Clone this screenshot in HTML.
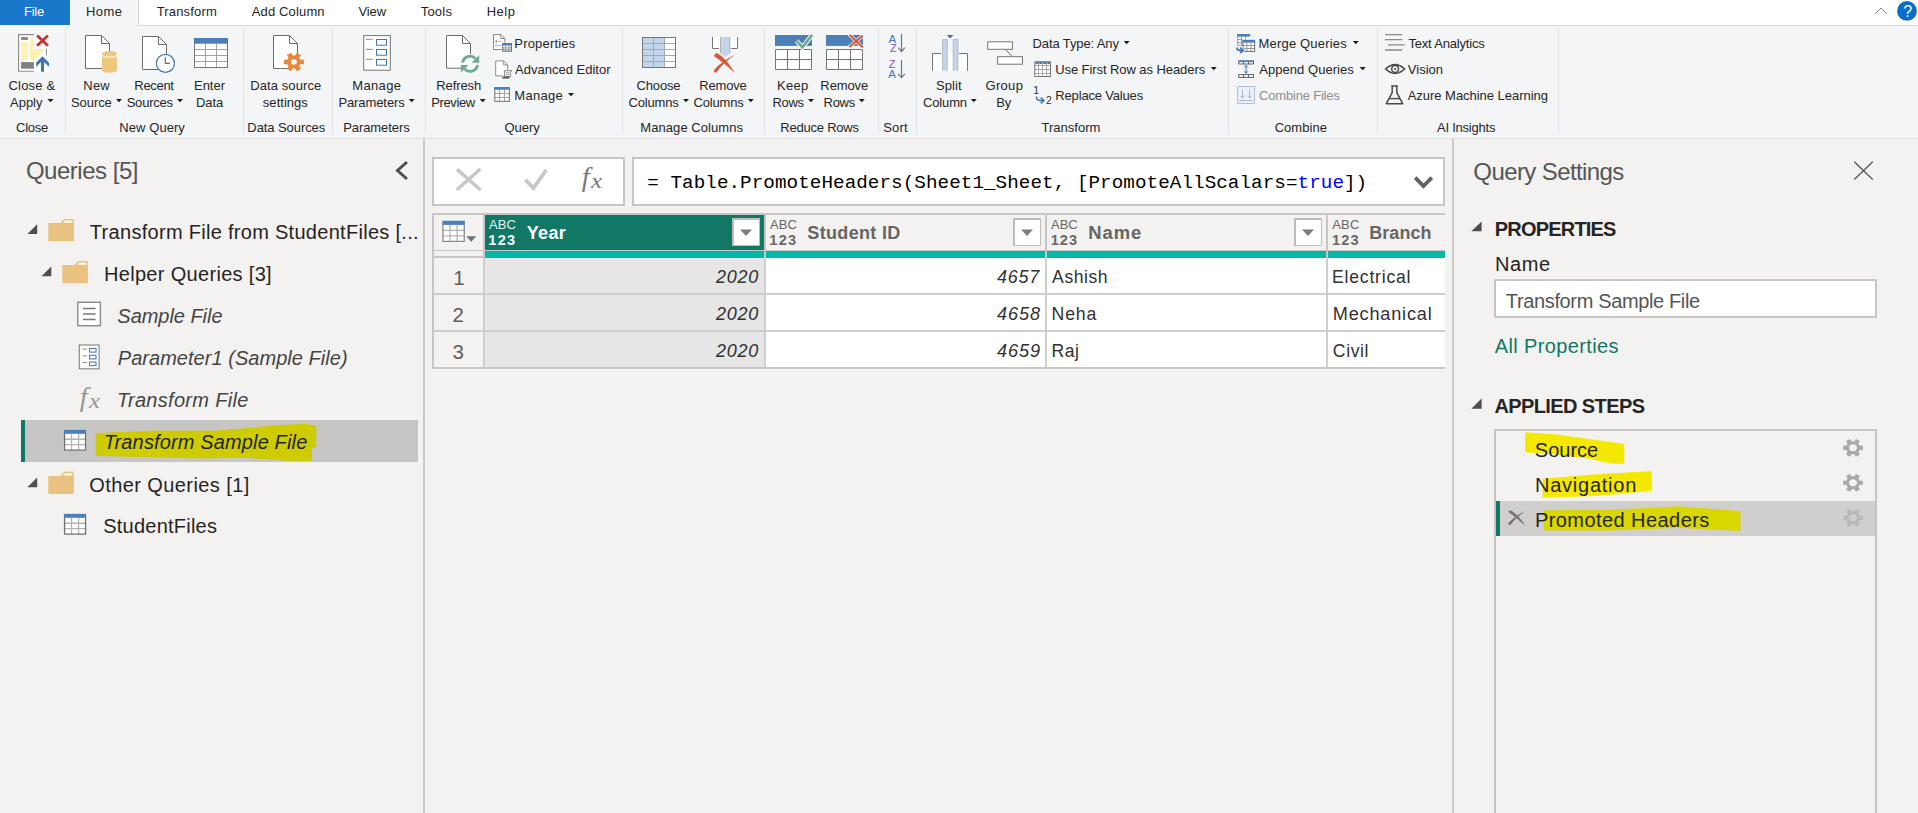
<!DOCTYPE html>
<html lang="en">
<head>
<meta charset="utf-8">
<title>Power Query Editor</title>
<style>
html,body{margin:0;padding:0;}
body{width:1918px;height:813px;overflow:hidden;background:#f3f2f1;position:relative;font-family:"Liberation Sans", sans-serif;color:#252423;}
#bg{position:absolute;left:0;top:0;width:1918px;height:813px;display:block;}
.t{position:absolute;white-space:pre;line-height:normal;}
</style>
</head>
<body>
<svg id="bg" width="1918" height="813" viewBox="0 0 1918 813">
<g shape-rendering="crispEdges">
<rect x="0" y="0" width="1918" height="25" fill="#ffffff" />
<rect x="0" y="25" width="1918" height="1" fill="#d6d8db" />
<rect x="0" y="26" width="1918" height="112" fill="#f4f5f7" />
<rect x="0" y="138" width="1918" height="1" fill="#dcdde0" />
<rect x="0" y="0" width="70" height="25" fill="#1978c9" />
<rect x="0" y="25" width="70" height="1" fill="#f8f9fa" />
<rect x="70" y="0" width="68" height="26" fill="#f4f5f7" />
<rect x="138" y="0" width="1" height="25" fill="#d6d8db" />
<rect x="65" y="28" width="1" height="106.5" fill="#e1e2e5" />
<rect x="243" y="28" width="1" height="106.5" fill="#e1e2e5" />
<rect x="332" y="28" width="1" height="106.5" fill="#e1e2e5" />
<rect x="425" y="28" width="1" height="106.5" fill="#e1e2e5" />
<rect x="622" y="28" width="1" height="106.5" fill="#e1e2e5" />
<rect x="764" y="28" width="1" height="106.5" fill="#e1e2e5" />
<rect x="878" y="28" width="1" height="106.5" fill="#e1e2e5" />
<rect x="916" y="28" width="1" height="106.5" fill="#e1e2e5" />
<rect x="1228" y="28" width="1" height="106.5" fill="#e1e2e5" />
<rect x="1377" y="28" width="1" height="106.5" fill="#e1e2e5" />
<rect x="1558" y="28" width="1" height="106.5" fill="#e1e2e5" />
<rect x="423" y="139" width="2" height="674" fill="#cbc9c7" />
<rect x="1452" y="139" width="2" height="674" fill="#cbc9c7" />
<rect x="21" y="420" width="397" height="42" fill="#c8c6c4" />
<rect x="21" y="420" width="4" height="42" fill="#117865" />
<rect x="433.0" y="158.0" width="191" height="47" fill="#ffffff" stroke="#c8c6c4" stroke-width="2" />
<rect x="633.0" y="158.0" width="811" height="47" fill="#ffffff" stroke="#c8c6c4" stroke-width="2" />
<rect x="432" y="213" width="1013" height="156" fill="#c8c6c4" />
<rect x="434" y="258" width="1011" height="109" fill="#d0cecc" />
<rect x="434" y="215" width="49" height="35" fill="#f3f2f1" />
<rect x="485" y="215" width="279" height="35" fill="#117865" />
<rect x="766" y="215" width="279" height="35" fill="#f3f2f1" />
<rect x="1047" y="215" width="279" height="35" fill="#f3f2f1" />
<rect x="1328" y="215" width="117" height="35" fill="#f3f2f1" />
<rect x="434" y="251" width="49" height="5" fill="#f3f2f1" />
<rect x="485" y="251" width="279" height="7" fill="#01b8aa" />
<rect x="766" y="251" width="279" height="7" fill="#01b8aa" />
<rect x="1047" y="251" width="279" height="7" fill="#01b8aa" />
<rect x="1328" y="251" width="117" height="7" fill="#01b8aa" />
<rect x="434" y="258" width="49" height="35" fill="#f3f2f1" />
<rect x="485" y="258" width="279" height="35" fill="#e6e6e6" />
<rect x="766" y="258" width="279" height="35" fill="#ffffff" />
<rect x="1047" y="258" width="279" height="35" fill="#ffffff" />
<rect x="1328" y="258" width="117" height="35" fill="#ffffff" />
<rect x="434" y="295" width="49" height="35" fill="#f3f2f1" />
<rect x="485" y="295" width="279" height="35" fill="#e6e6e6" />
<rect x="766" y="295" width="279" height="35" fill="#ffffff" />
<rect x="1047" y="295" width="279" height="35" fill="#ffffff" />
<rect x="1328" y="295" width="117" height="35" fill="#ffffff" />
<rect x="434" y="332" width="49" height="35" fill="#f3f2f1" />
<rect x="485" y="332" width="279" height="35" fill="#e6e6e6" />
<rect x="766" y="332" width="279" height="35" fill="#ffffff" />
<rect x="1047" y="332" width="279" height="35" fill="#ffffff" />
<rect x="1328" y="332" width="117" height="35" fill="#ffffff" />
<rect x="732.9000000000001" y="219.0" width="26.399999999999956" height="26.29999999999999" fill="#ffffff" stroke="#bfbdbb" stroke-width="1.4" />
<rect x="1013.9000000000001" y="219.0" width="26.399999999999956" height="26.29999999999999" fill="#ffffff" stroke="#bfbdbb" stroke-width="1.4" />
<rect x="1294.9" y="219.0" width="26.399999999999956" height="26.29999999999999" fill="#ffffff" stroke="#bfbdbb" stroke-width="1.4" />
<rect x="1495.0" y="280.0" width="381" height="37" fill="#ffffff" stroke="#c8c6c4" stroke-width="2" />
<rect x="1495.0" y="430.0" width="381" height="399" fill="none" stroke="#c8c6c4" stroke-width="2" />
<rect x="1496" y="501" width="379" height="35" fill="#d0cfce" />
<rect x="1496" y="501" width="4" height="35" fill="#117865" />
</g>
<path d="M740 229.5H752L746 236Z" fill="#7d7d7d"/>
<path d="M1021 229.5H1033L1027 236Z" fill="#7d7d7d"/>
<path d="M1302 229.5H1314L1308 236Z" fill="#7d7d7d"/>
<path d="M96.3 433.6L152.6 431.1L215.2 431.1L246.4 428.6L277.7 425.5L305.3 424.3L315.9 426.1L315.9 446.8L311.3 448L311.3 460.6L290.3 460.6L246.4 457.4L196.4 458.1L152.6 456.8L96.3 455.5Z" fill="#cecb00" stroke="#cecb00" stroke-width="0.8" stroke-linejoin="round"/>
<path d="M1525.6 432.7L1555.6 434.8L1589.4 439.5L1623.9 444.2L1623.9 463.4L1609.7 462.9L1589.4 458.4L1555.6 453.7L1525.6 452.1Z" fill="#f5e800" stroke="#f5e800" stroke-width="0.8" stroke-linejoin="round"/>
<path d="M1543 479.1L1596.2 474.7L1651.4 471.6L1651.4 490.5L1596.2 495.6L1543 497.3Z" fill="#f5e800" stroke="#f5e800" stroke-width="0.8" stroke-linejoin="round"/>
<path d="M1544.1 510.8L1609.7 510.3L1677.3 506.7L1711.2 509.2L1740 511.6L1740 530.5L1677.3 527.4L1609.7 530.1L1544.1 530.1Z" fill="#d9d600" stroke="#d9d600" stroke-width="0.8" stroke-linejoin="round"/>
<path d="M1875 14L1881 8L1887 14" fill="none" stroke="#858585" stroke-width="1"/>
<circle cx="1907" cy="10.9" r="9.9" fill="#0b6cc9"/>
<path d="M47.5 99H53.5L50.5 102.3Z" fill="#1a1a1a"/>
<path d="M116 99H122L119.0 102.3Z" fill="#1a1a1a"/>
<path d="M177 99H183L180.0 102.3Z" fill="#1a1a1a"/>
<path d="M408.7 99H414.7L411.7 102.3Z" fill="#1a1a1a"/>
<path d="M479.7 99H485.7L482.7 102.3Z" fill="#1a1a1a"/>
<path d="M683 99H689L686.0 102.3Z" fill="#1a1a1a"/>
<path d="M747.8 99H753.8L750.8 102.3Z" fill="#1a1a1a"/>
<path d="M808 99H814L811.0 102.3Z" fill="#1a1a1a"/>
<path d="M858.8 99H864.8L861.8 102.3Z" fill="#1a1a1a"/>
<path d="M970.8 99H976.8L973.8 102.3Z" fill="#1a1a1a"/>
<path d="M568 93H574L571.0 96.3Z" fill="#1a1a1a"/>
<path d="M1123.7 41H1129.7L1126.7 44.3Z" fill="#1a1a1a"/>
<path d="M1210.8 67H1216.8L1213.8 70.3Z" fill="#1a1a1a"/>
<path d="M1352.8 41H1358.8L1355.8 44.3Z" fill="#1a1a1a"/>
<path d="M1359.7 67H1365.7L1362.7 70.3Z" fill="#1a1a1a"/>
<rect x="18" y="34" width="31.4" height="38" fill="#ffffff"/>
<path d="M34 34.6H18.6V71.3H34" fill="none" stroke="#8a8a8a" stroke-width="1.1"/>
<rect x="21.1" y="37.1" width="6.8" height="2.8" fill="#808080"/>
<rect x="20.9" y="42" width="7.1" height="18" fill="#fff0b3"/>
<path d="M30 37.1H34V48.9H44.1V50.6L34.3 60H30Z" fill="#fff0b3"/>
<rect x="21.1" y="62.1" width="12.8" height="6.6" fill="#808080"/>
<path d="M37.1 35.5L47.9 45.8M47.9 35.5L37.1 45.8" stroke="#cc2f2b" stroke-width="2.8" fill="none"/>
<path d="M42.5 56.3L49 62.8V66.7L44 61.9V71.8H41V61.9L36.1 66.7V62.8Z" fill="#3d76b3"/>
<path d="M46.4 48.9V55.7" stroke="#8a8a8a" stroke-width="1" fill="none"/>
<path d="M85.5 35.5H101.5L109.5 43.5V68.5H85.5Z" fill="#ffffff" stroke="#6e6e6e" stroke-width="1"/>
<path d="M101.5 35.5V43.5H109.5" fill="none" stroke="#6e6e6e" stroke-width="1"/>
<path d="M102 53.5V70.2a7.5 2.6 0 0 0 15 0V53.5a7.5 2.6 0 0 0 -15 0Z" fill="#edc87e"/>
<path d="M102 54.6a7.5 2.6 0 0 0 15 0" fill="none" stroke="#fdf8ec" stroke-width="1.2"/>
<path d="M142.5 36.5H158.5L166.5 44.5V69.5H142.5Z" fill="#ffffff" stroke="#6e6e6e" stroke-width="1"/>
<path d="M158.5 36.5V44.5H166.5" fill="none" stroke="#6e6e6e" stroke-width="1"/>
<circle cx="165.4" cy="63.4" r="9" fill="#ffffff" stroke="#3d76b3" stroke-width="1.2"/>
<path d="M165.4 57.2V63.4H169.8" fill="none" stroke="#6e6e6e" stroke-width="1.2"/>
<rect x="194" y="38" width="34" height="30" fill="#ffffff"/>
<path d="M194 49.5H228M194 55.5H228M194 61.5H228M205.5 43.5V68M216.5 43.5V68" stroke="#a3a3a3" stroke-width="1" fill="none"/>
<rect x="194.5" y="38.5" width="33" height="29" fill="none" stroke="#757575"/>
<rect x="194" y="38" width="34" height="5.7" fill="#4a7fb8"/>
<path d="M273.5 35.5H289.5L297.5 43.5V68.5H273.5Z" fill="#ffffff" stroke="#6e6e6e" stroke-width="1"/>
<path d="M289.5 35.5V43.5H297.5" fill="none" stroke="#6e6e6e" stroke-width="1"/>
<circle cx="293.9" cy="62" r="8" fill="#f9f9fa"/>
<g transform="translate(293.9 62) scale(1 0.93) translate(-293.9 -62)"><rect x="291.50" y="52.00" width="4.80" height="6.70" fill="#e8883c" transform="rotate(30.0 293.9 62)"/><rect x="291.50" y="52.00" width="4.80" height="6.70" fill="#e8883c" transform="rotate(90.0 293.9 62)"/><rect x="291.50" y="52.00" width="4.80" height="6.70" fill="#e8883c" transform="rotate(150.0 293.9 62)"/><rect x="291.50" y="52.00" width="4.80" height="6.70" fill="#e8883c" transform="rotate(210.0 293.9 62)"/><rect x="291.50" y="52.00" width="4.80" height="6.70" fill="#e8883c" transform="rotate(270.0 293.9 62)"/><rect x="291.50" y="52.00" width="4.80" height="6.70" fill="#e8883c" transform="rotate(330.0 293.9 62)"/><circle cx="293.9" cy="62" r="5.00" fill="none" stroke="#e8883c" stroke-width="4.00"/></g>
<rect x="363.7" y="35.6" width="26.6" height="34.6" fill="#ffffff" stroke="#757575"/>
<rect x="376.5" y="39.5" width="10" height="5.7" fill="#ffffff" stroke="#3d76b3" stroke-width="1"/>
<path d="M366 39.3H372.8" stroke="#8a8a8a" stroke-width="1"/>
<rect x="376.5" y="49.5" width="10" height="5.7" fill="#ffffff" stroke="#3d76b3" stroke-width="1"/>
<path d="M366 49.3H372.8" stroke="#8a8a8a" stroke-width="1"/>
<rect x="376.5" y="59.5" width="10" height="5.7" fill="#ffffff" stroke="#3d76b3" stroke-width="1"/>
<path d="M366 59.3H372.8" stroke="#8a8a8a" stroke-width="1"/>
<path d="M446.5 35.5H462.5L470.5 43.5V68.2H446.5Z" fill="#ffffff" stroke="#6e6e6e" stroke-width="1"/>
<path d="M462.5 35.5V43.5H470.5" fill="none" stroke="#6e6e6e" stroke-width="1"/>
<circle cx="470.1" cy="63.8" r="9.8" fill="#f7f8f9"/>
<path d="M462.7 62.6A7.5 7.5 0 0 1 475.6 58.6" fill="none" stroke="#6fa992" stroke-width="2.8"/>
<path d="M479.2 55.2V62.8H471.6Z" fill="#6fa992"/>
<path d="M477.5 65A7.5 7.5 0 0 1 464.6 69" fill="none" stroke="#6fa992" stroke-width="2.8"/>
<path d="M460.9 72.5V64.9H468.5Z" fill="#6fa992"/>
<path d="M493.5 34.5H500.8L504.8 38.5V49.5H493.5Z" fill="#ffffff" stroke="#8a8a8a" stroke-width="1"/>
<path d="M500.8 34.5V38.5H504.8" fill="none" stroke="#8a8a8a" stroke-width="1"/>
<circle cx="496.4" cy="41.4" r="1.1" fill="#8a8a8a"/><circle cx="496.4" cy="45.4" r="0.9" fill="none" stroke="#8a8a8a" stroke-width="0.7"/>
<path d="M498.7 41.4h2.6M498.7 45.4h2.6" stroke="#9a9a9a" stroke-width="0.9"/>
<rect x="501.7" y="42.6" width="10.8" height="9.6" fill="#f4f5f7"/>
<rect x="502.2" y="43.1" width="9.8" height="8.6" fill="#ffffff"/>
<path d="M502.2 47.9H512M502.2 49.8H512M505.5 45.4V51.7M508.8 45.4V51.7" stroke="#8f8f8f" stroke-width="0.9" fill="none"/>
<rect x="502.7" y="43.6" width="8.8" height="7.6" fill="none" stroke="#6e6e6e"/>
<rect x="502.2" y="43.1" width="9.8" height="2.4" fill="#4a7fb8"/>
<path d="M495.7 60.9H503.7L507.7 64.9V75.9H495.7Z" fill="#ffffff" stroke="#8a8a8a" stroke-width="1"/>
<path d="M503.7 60.9V64.9H507.7" fill="none" stroke="#8a8a8a" stroke-width="1"/>
<rect x="503" y="69.6" width="9.5" height="9.5" fill="#f4f5f7"/>
<path d="M504.7 70.7H511.8L510.3 72.3V76.5H504.7Z" fill="#ffffff" stroke="#6e6e6e" stroke-width="0.9"/>
<path d="M506 72.7h3M506 74.5h3" stroke="#8a8a8a" stroke-width="0.8"/>
<rect x="502.4" y="76.6" width="7" height="2" fill="#5e5e5e"/>
<rect x="494.3" y="87.2" width="15.6" height="14.6" fill="#ffffff"/>
<path d="M494.3 93.5H509.9M494.3 97.5H509.9M499.5 89.6V101.8M504.5 89.6V101.8" stroke="#a3a3a3" stroke-width="1" fill="none"/>
<rect x="494.8" y="87.7" width="14.6" height="13.6" fill="none" stroke="#6e6e6e"/>
<rect x="494.3" y="87.2" width="15.6" height="2.5" fill="#4a7fb8"/>
<rect x="642" y="37" width="34" height="31" fill="#ffffff"/>
<rect x="642" y="37" width="22.5" height="31" fill="#c2d5eb"/>
<path d="M642 43.5H676M642 49.5H676M642 55.5H676M642 61.5H676M653.5 37V68M664.5 37V68" stroke="#a8a8a8" stroke-width="1" fill="none"/>
<rect x="642.5" y="37.5" width="33" height="30" fill="none" stroke="#757575"/>
<rect x="712" y="37" width="26" height="12" fill="#ffffff"/>
<path d="M712.5 37V48.5H719M737.5 37V48.5H731.2" fill="none" stroke="#757575" stroke-width="1"/>
<path d="M720.3 37H730V53.2L725.2 57L720.3 53.2Z" fill="#c2d5eb"/>
<path d="M720.5 37V53M729.8 37V53" fill="none" stroke="#a8a8a8" stroke-width="0.9"/>
<path d="M714.2 56.2C714.2 53.6 716.3 52.6 718.6 54C724.5 57.8 730.5 65.5 734.9 73C729 67.3 721 60.8 714.2 56.2Z" fill="#d9583a"/>
<path d="M735 54.8C728.3 57.6 719.5 63.8 714.3 69.9C713.3 71.6 714.4 73.2 716.4 72.4C721 66 727.5 59.8 735 54.8Z" fill="#d9583a"/>
<rect x="775" y="35" width="37" height="10.9" fill="#4a7fb8"/>
<rect x="775" y="49" width="37" height="21" fill="#ffffff"/>
<path d="M775.5 49.5H811.5V69.5H775.5ZM775 59.5H812M787.5 49.5V69.5M799.5 49.5V69.5" fill="none" stroke="#757575" stroke-width="1"/>
<path d="M796.5 40.9L802.4 47.2L812.2 34.9" fill="none" stroke="#fafbfc" stroke-width="4.6"/>
<path d="M796.5 40.9L802.4 47.2L812.2 34.9" fill="none" stroke="#6fa992" stroke-width="2.7"/>
<rect x="826" y="35" width="37" height="10.9" fill="#4a7fb8"/>
<rect x="826" y="49" width="37" height="21" fill="#ffffff"/>
<path d="M826.5 49.5H862.5V69.5H826.5ZM826 59.5H863M838.5 49.5V69.5M850.5 49.5V69.5" fill="none" stroke="#757575" stroke-width="1"/>
<path d="M849.9 35.2L862.6 47.2M862.5 35.8L849.3 46.9" fill="none" stroke="#fafbfc" stroke-width="3.6" stroke-linecap="round"/>
<path d="M850.3 35.6L862.2 46.8M862.1 36.1L849.9 46.4" fill="none" stroke="#d9583a" stroke-width="2.2" stroke-linecap="round"/>
<path d="M901.5 34V51.4M898.1 47.7L901.5 51.5L904.9 47.7" fill="none" stroke="#757575" stroke-width="1.2"/>
<path d="M901.5 60V77.5M898.1 73.8L901.5 77.6L904.9 73.8" fill="none" stroke="#757575" stroke-width="1.2"/>
<rect x="932" y="53" width="36" height="17.8" fill="#ffffff"/>
<path d="M932.5 70.8V53.5H941M959 53.5H967.5V70.8" fill="none" stroke="#757575"/>
<rect x="942.2" y="39.2" width="5.2" height="31.6" fill="#c2d5eb"/><rect x="953" y="39.2" width="5.2" height="31.6" fill="#c2d5eb"/>
<path d="M942.5 70.8V39.5H947.2V70.8M953.2 70.8V39.5H957.9V70.8" fill="none" stroke="#b4b4b4" stroke-width="0.8"/>
<path d="M946.7 35H953.5L950.1 38.5Z" fill="#3d76b3"/>
<rect x="987.7" y="41.8" width="24.7" height="7.5" fill="#ffffff" stroke="#757575"/>
<rect x="997.6" y="56.7" width="24.9" height="7.5" fill="#ffffff" stroke="#757575"/>
<path d="M1005.7 49.7L1012 56.3" stroke="#757575" fill="none"/>
<rect x="1034.3" y="61.2" width="16.7" height="15.8" fill="#ffffff"/>
<path d="M1034.3 65.5H1051M1034.3 69.5H1051M1034.3 73.5H1051M1038.5 61.2V77M1042.5 61.2V77M1046.5 61.2V77" stroke="#a8a8a8" stroke-width="1" fill="none"/>
<rect x="1034.8" y="61.7" width="15.7" height="14.8" fill="none" stroke="#757575"/>
<path d="M1035.6 63H1037.9M1039.2 63H1041.9M1043.2 63H1045.9M1047.2 63H1049.8" stroke="#3d76b3" stroke-width="1.8" fill="none"/>
<path d="M1036.4 96.6C1036.4 99.5 1037.5 100.5 1040 100.5H1043.4M1040.8 97.6L1043.9 100.5L1040.8 103.4" fill="none" stroke="#3d76b3" stroke-width="1.5"/>
<rect x="1237.2" y="34" width="13" height="11.8" fill="#ffffff"/>
<path d="M1237.7 34V45.3H1243M1237.2 39.5H1243M1237.2 42.5H1243M1241.5 36.5V45.8M1245.5 36.5V40" stroke="#9a9a9a" stroke-width="1" fill="none"/>
<rect x="1237.2" y="34" width="13" height="2.6" fill="#4a7fb8"/>
<rect x="1242" y="39.4" width="13.6" height="13" fill="#f4f5f7"/>
<rect x="1242.5" y="39.9" width="12.6" height="12" fill="#ffffff"/>
<path d="M1242.5 45.5H1255.1M1242.5 48.5H1255.1M1246.8 42.5V51.9M1250.9 42.5V51.9" stroke="#8f8f8f" stroke-width="0.9" fill="none"/>
<rect x="1243" y="40.4" width="11.6" height="11" fill="none" stroke="#6e6e6e"/>
<rect x="1242.5" y="39.9" width="12.6" height="2.7" fill="#4a7fb8"/>
<path d="M1236.9 47.4C1236.9 49.6 1237.9 50.3 1240 50.3H1243M1240.1 47.6L1243.4 50.3L1240.1 53" fill="none" stroke="#f4f5f7" stroke-width="3.2"/>
<path d="M1236.9 47.4C1236.9 49.6 1237.9 50.3 1240 50.3H1243M1240.1 47.6L1243.4 50.3L1240.1 53" fill="none" stroke="#3d76b3" stroke-width="1.7"/>
<rect x="1238.2" y="60.2" width="15.8" height="4.2" fill="#ffffff"/>
<rect x="1238.2" y="60.2" width="15.8" height="1.9" fill="#4a7fb8"/>
<path d="M1238.7 62V64H1253.5V62M1243.5 62V64M1248.7 62V64" stroke="#5e5e5e" fill="none"/>
<rect x="1238.7" y="74.6" width="14.8" height="2.8" fill="#ffffff" stroke="#5e5e5e"/>
<path d="M1243.5 74.4V77.6M1248.7 74.4V77.6" stroke="#5e5e5e" fill="none"/>
<path d="M1246.1 65.5V73.2M1244.3 67.4L1246.1 65.4L1247.9 67.4M1244.3 71.3L1246.1 73.3L1247.9 71.3" stroke="#3d76b3" fill="none" stroke-width="1"/>
<rect x="1237.7" y="86.6" width="16.8" height="16.8" fill="#eef3fb" stroke="#a9bcd6"/>
<path d="M1242.5 89.5V98M1240.5 95.8L1242.5 98.1L1244.5 95.8M1249.7 89.5V98M1247.7 95.8L1249.7 98.1L1251.7 95.8M1239.2 100.5H1253" stroke="#a3b8d4" fill="none"/>
<path d="M1385 34.6H1402.3M1385 39.6H1402.3M1387.9 44.9H1404.7M1385 50H1402.3" stroke="#8a8a8a" stroke-width="1.3" fill="none"/>
<path d="M1385.6 69Q1395.1 60.2 1404.6 69Q1395.1 77.8 1385.6 69Z" fill="none" stroke="#4a4a4a" stroke-width="1.6"/>
<circle cx="1395.1" cy="69" r="3.4" fill="none" stroke="#4a4a4a" stroke-width="1.5"/><circle cx="1395.1" cy="69" r="1.1" fill="#4a4a4a"/>
<path d="M1391.2 85.9H1397.8M1392.2 86V92.6L1386.3 103.7H1402.7L1396.8 92.6V86" fill="none" stroke="#4a4a4a" stroke-width="1.5" stroke-linejoin="round"/>
<path d="M1389 98.6H1400" stroke="#4a4a4a" stroke-width="1.4"/>
<path d="M407 162L397.5 170.5L407 179" fill="none" stroke="#505050" stroke-width="3"/>
<path d="M37.2 224.3V234.1H27.4Z" fill="#4f4f4f"/>
<path d="M48.3 223.1H60.599999999999994L64.1 218.9H73.9V241.20000000000002H48.3Z" fill="#e9c281"/>
<path d="M65.3 220.4H72.3V222.8H63.3Z" fill="#fefaf0"/>
<path d="M51.3 266.4V276.2H41.5Z" fill="#4f4f4f"/>
<path d="M62.3 265.09999999999997H74.6L78.1 260.9H87.9V283.2H62.3Z" fill="#e9c281"/>
<path d="M79.3 262.4H86.3V264.79999999999995H77.3Z" fill="#fefaf0"/>
<path d="M37.2 477.4V487.2H27.4Z" fill="#4f4f4f"/>
<path d="M48.3 475.9H60.599999999999994L64.1 471.7H73.9V494.0H48.3Z" fill="#e9c281"/>
<path d="M65.3 473.2H72.3V475.59999999999997H63.3Z" fill="#fefaf0"/>
<rect x="77.8" y="302.3" width="22.6" height="23.4" fill="#ffffff" stroke="#8a8a8a" stroke-width="1.4"/>
<path d="M83 308.5H95.5M83 314H95.5M83 319.5H95.5" stroke="#7a7a7a" stroke-width="1.3"/>
<rect x="79.3" y="345" width="19.8" height="23.8" fill="#ffffff" stroke="#8a8a8a" stroke-width="1.2"/>
<rect x="89.5" y="348.5" width="6.5" height="3.6" fill="#ffffff" stroke="#4a7ebb" stroke-width="1.1"/>
<path d="M82.5 349.1H87" stroke="#8a8a8a" stroke-width="1"/>
<rect x="89.5" y="355.3" width="6.5" height="3.6" fill="#ffffff" stroke="#4a7ebb" stroke-width="1.1"/>
<path d="M82.5 355.90000000000003H87" stroke="#8a8a8a" stroke-width="1"/>
<rect x="89.5" y="362" width="6.5" height="3.6" fill="#ffffff" stroke="#4a7ebb" stroke-width="1.1"/>
<path d="M82.5 362.6H87" stroke="#8a8a8a" stroke-width="1"/>
<rect x="63.9" y="429.8" width="22.3" height="21" fill="#ffffff"/>
<path d="M71.55 433.8V450.8M63.9 439.25H86.2M78.55 433.8V450.8M63.9 444.70H86.2" stroke="#b4b4b4" stroke-width="1.3" fill="none"/>
<path d="M64.55 433.3V450.15000000000003H85.55V433.3" stroke="#6e6e6e" stroke-width="1.3" fill="none"/>
<rect x="63.9" y="429.8" width="22.3" height="4" fill="#4a7fb8"/>
<rect x="63.9" y="513.8" width="22.3" height="21" fill="#ffffff"/>
<path d="M71.55 517.8V534.8M63.9 523.25H86.2M78.55 517.8V534.8M63.9 528.70H86.2" stroke="#b4b4b4" stroke-width="1.3" fill="none"/>
<path d="M64.55 517.3V534.15H85.55V517.3" stroke="#6e6e6e" stroke-width="1.3" fill="none"/>
<rect x="63.9" y="513.8" width="22.3" height="4" fill="#4a7fb8"/>
<path d="M457 169.3L480.7 190M480.3 169L456.7 190" fill="none" stroke="#c8c8c8" stroke-width="3.6"/>
<path d="M525.3 179.8L533.5 188L546.2 170" fill="none" stroke="#c8c8c8" stroke-width="3.8"/>
<path d="M1415.2 177.6L1423.5 186L1431.8 177.6" fill="none" stroke="#626262" stroke-width="3.7"/>
<rect x="442.3" y="220.7" width="22.6" height="21.3" fill="#ffffff"/>
<path d="M450.05 224.89999999999998V242.0M442.3 230.38H464.90000000000003M457.15 224.89999999999998V242.0M442.3 235.87H464.90000000000003" stroke="#b4b4b4" stroke-width="1.3" fill="none"/>
<path d="M442.95 224.39999999999998V241.35H464.25000000000006V224.39999999999998" stroke="#8a8a8a" stroke-width="1.3" fill="none"/>
<rect x="442.3" y="220.7" width="22.6" height="4.2" fill="#4a7fb8"/>
<path d="M466.2 236.2H476.2L471.2 241.8Z" fill="#707070"/>
<path d="M1854.3 161.7L1872.7 179.5M1872.7 161.7L1854.3 179.5" fill="none" stroke="#555555" stroke-width="1.3"/>
<path d="M1481.6 221.4V231.3H1471.3Z" fill="#4f4f4f"/>
<path d="M1481.6 398.4V408.7H1471.3Z" fill="#4f4f4f"/>
<path d="M1508.5 512C1508.6 510.3 1510.4 510 1512 511C1516.8 514 1521.6 519.5 1525.4 525.8C1520.5 521.4 1514 516.2 1508.5 512Z" fill="#777777"/>
<path d="M1525.4 511.1C1519.5 513.6 1513 518.3 1508.6 522.5C1507.7 523.9 1508.8 525.5 1510.6 524.8C1514.6 519.8 1519.6 515.2 1525.4 511.1Z" fill="#777777"/>
<g transform="translate(1853 447.8) scale(1 0.91) translate(-1853 -447.8)"><rect x="1850.70" y="437.90" width="4.60" height="5.70" fill="#a9a9a9" transform="rotate(30.0 1853 447.8)"/><rect x="1850.70" y="437.90" width="4.60" height="5.70" fill="#a9a9a9" transform="rotate(90.0 1853 447.8)"/><rect x="1850.70" y="437.90" width="4.60" height="5.70" fill="#a9a9a9" transform="rotate(150.0 1853 447.8)"/><rect x="1850.70" y="437.90" width="4.60" height="5.70" fill="#a9a9a9" transform="rotate(210.0 1853 447.8)"/><rect x="1850.70" y="437.90" width="4.60" height="5.70" fill="#a9a9a9" transform="rotate(270.0 1853 447.8)"/><rect x="1850.70" y="437.90" width="4.60" height="5.70" fill="#a9a9a9" transform="rotate(330.0 1853 447.8)"/><circle cx="1853" cy="447.8" r="5.55" fill="none" stroke="#a9a9a9" stroke-width="3.30"/></g>
<g transform="translate(1853 482.8) scale(1 0.91) translate(-1853 -482.8)"><rect x="1850.70" y="472.90" width="4.60" height="5.70" fill="#a9a9a9" transform="rotate(30.0 1853 482.8)"/><rect x="1850.70" y="472.90" width="4.60" height="5.70" fill="#a9a9a9" transform="rotate(90.0 1853 482.8)"/><rect x="1850.70" y="472.90" width="4.60" height="5.70" fill="#a9a9a9" transform="rotate(150.0 1853 482.8)"/><rect x="1850.70" y="472.90" width="4.60" height="5.70" fill="#a9a9a9" transform="rotate(210.0 1853 482.8)"/><rect x="1850.70" y="472.90" width="4.60" height="5.70" fill="#a9a9a9" transform="rotate(270.0 1853 482.8)"/><rect x="1850.70" y="472.90" width="4.60" height="5.70" fill="#a9a9a9" transform="rotate(330.0 1853 482.8)"/><circle cx="1853" cy="482.8" r="5.55" fill="none" stroke="#a9a9a9" stroke-width="3.30"/></g>
<g transform="translate(1853 517.8) scale(1 0.91) translate(-1853 -517.8)"><rect x="1850.70" y="507.90" width="4.60" height="5.70" fill="#b9b9b9" transform="rotate(30.0 1853 517.8)"/><rect x="1850.70" y="507.90" width="4.60" height="5.70" fill="#b9b9b9" transform="rotate(90.0 1853 517.8)"/><rect x="1850.70" y="507.90" width="4.60" height="5.70" fill="#b9b9b9" transform="rotate(150.0 1853 517.8)"/><rect x="1850.70" y="507.90" width="4.60" height="5.70" fill="#b9b9b9" transform="rotate(210.0 1853 517.8)"/><rect x="1850.70" y="507.90" width="4.60" height="5.70" fill="#b9b9b9" transform="rotate(270.0 1853 517.8)"/><rect x="1850.70" y="507.90" width="4.60" height="5.70" fill="#b9b9b9" transform="rotate(330.0 1853 517.8)"/><circle cx="1853" cy="517.8" r="5.55" fill="none" stroke="#b9b9b9" stroke-width="3.30"/></g>
</svg>
<span class="t" style="left:23.97px;top:4.0px;font-size:13px;letter-spacing:-0.229px;color:#ffffff">File</span>
<span class="t" style="left:85.97px;top:4.0px;font-size:13px;letter-spacing:0.473px;color:#262626">Home</span>
<span class="t" style="left:156.64px;top:4.0px;font-size:13px;letter-spacing:0.186px;color:#262626">Transform</span>
<span class="t" style="left:251.68px;top:4.0px;font-size:13px;letter-spacing:0.154px;color:#262626">Add Column</span>
<span class="t" style="left:358.57px;top:4.0px;font-size:13px;letter-spacing:-0.141px;color:#262626">View</span>
<span class="t" style="left:420.64px;top:4.0px;font-size:13px;letter-spacing:0.254px;color:#262626">Tools</span>
<span class="t" style="left:486.77px;top:4.0px;font-size:13px;letter-spacing:0.456px;color:#262626">Help</span>
<span class="t" style="left:8.55px;top:78.0px;font-size:13px;letter-spacing:0.164px;color:#262626">Close &amp;</span>
<span class="t" style="left:10.00px;top:95.0px;font-size:13px;letter-spacing:-0.009px;color:#262626">Apply</span>
<span class="t" style="left:16.06px;top:120.0px;font-size:13px;letter-spacing:-0.281px;color:#262626">Close</span>
<span class="t" style="left:83.37px;top:78.0px;font-size:13px;letter-spacing:0.164px;color:#262626">New</span>
<span class="t" style="left:70.95px;top:95.0px;font-size:13px;letter-spacing:-0.060px;color:#262626">Source</span>
<span class="t" style="left:134.36px;top:78.0px;font-size:13px;letter-spacing:-0.332px;color:#262626">Recent</span>
<span class="t" style="left:126.67px;top:95.0px;font-size:13px;letter-spacing:-0.207px;color:#262626">Sources</span>
<span class="t" style="left:193.97px;top:78.0px;font-size:13px;letter-spacing:-0.005px;color:#262626">Enter</span>
<span class="t" style="left:195.97px;top:95.0px;font-size:13px;letter-spacing:-0.076px;color:#262626">Data</span>
<span class="t" style="left:119.36px;top:120.0px;font-size:13px;letter-spacing:0.062px;color:#262626">New Query</span>
<span class="t" style="left:250.36px;top:78.0px;font-size:13px;letter-spacing:0.073px;color:#262626">Data source</span>
<span class="t" style="left:262.85px;top:95.0px;font-size:13px;letter-spacing:0.026px;color:#262626">settings</span>
<span class="t" style="left:247.36px;top:120.0px;font-size:13px;letter-spacing:-0.085px;color:#262626">Data Sources</span>
<span class="t" style="left:352.36px;top:78.0px;font-size:13px;letter-spacing:0.316px;color:#262626">Manage</span>
<span class="t" style="left:338.38px;top:95.0px;font-size:13px;letter-spacing:-0.089px;color:#262626">Parameters</span>
<span class="t" style="left:343.17px;top:120.0px;font-size:13px;letter-spacing:-0.065px;color:#262626">Parameters</span>
<span class="t" style="left:436.17px;top:78.0px;font-size:13px;letter-spacing:-0.067px;color:#262626">Refresh</span>
<span class="t" style="left:431.17px;top:95.0px;font-size:13px;letter-spacing:-0.373px;color:#262626">Preview</span>
<span class="t" style="left:504.54px;top:120.0px;font-size:13px;letter-spacing:-0.029px;color:#262626">Query</span>
<span class="t" style="left:514.36px;top:36.0px;font-size:13px;letter-spacing:0.174px;color:#262626">Properties</span>
<span class="t" style="left:515.00px;top:62.0px;font-size:13px;letter-spacing:0.009px;color:#262626">Advanced Editor</span>
<span class="t" style="left:514.36px;top:88.0px;font-size:13px;letter-spacing:0.297px;color:#262626">Manage</span>
<span class="t" style="left:636.55px;top:78.0px;font-size:13px;letter-spacing:-0.167px;color:#262626">Choose</span>
<span class="t" style="left:628.55px;top:95.0px;font-size:13px;letter-spacing:-0.189px;color:#262626">Columns</span>
<span class="t" style="left:699.36px;top:78.0px;font-size:13px;letter-spacing:-0.221px;color:#262626">Remove</span>
<span class="t" style="left:693.55px;top:95.0px;font-size:13px;letter-spacing:-0.189px;color:#262626">Columns</span>
<span class="t" style="left:640.36px;top:120.0px;font-size:13px;letter-spacing:0.054px;color:#262626">Manage Columns</span>
<span class="t" style="left:776.96px;top:78.0px;font-size:13px;letter-spacing:0.309px;color:#262626">Keep</span>
<span class="t" style="left:772.58px;top:95.0px;font-size:13px;letter-spacing:-0.346px;color:#262626">Rows</span>
<span class="t" style="left:820.36px;top:78.0px;font-size:13px;letter-spacing:-0.118px;color:#262626">Remove</span>
<span class="t" style="left:823.58px;top:95.0px;font-size:13px;letter-spacing:-0.292px;color:#262626">Rows</span>
<span class="t" style="left:780.36px;top:120.0px;font-size:13px;letter-spacing:-0.236px;color:#262626">Reduce Rows</span>
<span class="t" style="left:883.32px;top:120.0px;font-size:13px;letter-spacing:0.128px;color:#262626">Sort</span>
<span class="t" style="left:935.95px;top:78.0px;font-size:13px;letter-spacing:0.099px;color:#262626">Split</span>
<span class="t" style="left:923.06px;top:95.0px;font-size:13px;letter-spacing:-0.153px;color:#262626">Column</span>
<span class="t" style="left:985.53px;top:78.0px;font-size:13px;letter-spacing:0.303px;color:#262626">Group</span>
<span class="t" style="left:996.18px;top:95.0px;font-size:13px;color:#262626">By</span>
<span class="t" style="left:1032.58px;top:36.0px;font-size:13px;letter-spacing:-0.117px;color:#262626">Data Type: Any</span>
<span class="t" style="left:1055.16px;top:62.0px;font-size:13px;letter-spacing:-0.075px;color:#262626">Use First Row as Headers</span>
<span class="t" style="left:1055.36px;top:88.0px;font-size:13px;letter-spacing:-0.177px;color:#262626">Replace Values</span>
<span class="t" style="left:1041.43px;top:120.0px;font-size:13px;letter-spacing:0.021px;color:#262626">Transform</span>
<span class="t" style="left:1258.58px;top:36.0px;font-size:13px;letter-spacing:0.173px;color:#262626">Merge Queries</span>
<span class="t" style="left:1259.26px;top:62.0px;font-size:13px;letter-spacing:0.044px;color:#262626">Append Queries</span>
<span class="t" style="left:1259.06px;top:88.0px;font-size:13px;letter-spacing:-0.190px;color:#8f8f8f">Combine Files</span>
<span class="t" style="left:1274.65px;top:120.0px;font-size:13px;letter-spacing:0.050px;color:#262626">Combine</span>
<span class="t" style="left:1408.43px;top:36.0px;font-size:13px;letter-spacing:-0.181px;color:#262626">Text Analytics</span>
<span class="t" style="left:1407.87px;top:62.0px;font-size:13px;letter-spacing:-0.019px;color:#262626">Vision</span>
<span class="t" style="left:1407.68px;top:88.0px;font-size:13px;letter-spacing:-0.028px;color:#262626">Azure Machine Learning</span>
<span class="t" style="left:1436.93px;top:120.0px;font-size:13px;letter-spacing:-0.216px;color:#262626">AI Insights</span>
<span class="t" style="left:25.90px;top:157.4px;font-size:24px;letter-spacing:-0.474px;color:#555555">Queries [5]</span>
<span class="t" style="left:89.85px;top:220.5px;font-size:20px;letter-spacing:0.291px;color:#252423">Transform File from StudentFiles [...</span>
<span class="t" style="left:103.93px;top:263.1px;font-size:20px;letter-spacing:0.321px;color:#252423">Helper Queries [3]</span>
<span class="t" style="left:117.35px;top:304.9px;font-size:20px;letter-spacing:-0.044px;font-style:italic;color:#444444">Sample File</span>
<span class="t" style="left:117.77px;top:346.7px;font-size:20px;letter-spacing:0.036px;font-style:italic;color:#444444">Parameter1 (Sample File)</span>
<span class="t" style="left:116.92px;top:389.3px;font-size:20px;letter-spacing:0.304px;font-style:italic;color:#444444">Transform File</span>
<span class="t" style="left:103.70px;top:431.2px;font-size:20px;letter-spacing:0.139px;font-style:italic;color:#1f1f1f">Transform Sample File</span>
<span class="t" style="left:89.21px;top:473.8px;font-size:20px;letter-spacing:0.417px;color:#252423">Other Queries [1]</span>
<span class="t" style="left:103.23px;top:515.2px;font-size:20px;letter-spacing:0.232px;color:#252423">StudentFiles</span>
<span class="t" style="left:647.23px;top:171.8px;font-size:19.25px;letter-spacing:0.061px;font-family:'Liberation Mono', monospace;color:#000000">= Table.PromoteHeaders(Sheet1_Sheet, [PromoteAllScalars=<span style="color:#0000ff">true</span>])</span>
<span class="t" style="left:526.64px;top:222.7px;font-size:18px;letter-spacing:0.403px;font-weight:700;color:#ffffff">Year</span>
<span class="t" style="left:807.31px;top:222.7px;font-size:18px;letter-spacing:0.339px;font-weight:700;color:#676563">Student ID</span>
<span class="t" style="left:1088.31px;top:221.7px;font-size:18.42px;letter-spacing:0.902px;font-weight:700;color:#676563">Name</span>
<span class="t" style="left:1369.19px;top:222.7px;font-size:18px;letter-spacing:0.058px;font-weight:700;color:#676563">Branch</span>
<span class="t" style="left:453.27px;top:266.0px;font-size:20.5px;color:#605e5c">1</span>
<span class="t" style="left:715.94px;top:267.0px;font-size:18px;letter-spacing:0.760px;font-style:italic;color:#323130">2020</span>
<span class="t" style="left:452.50px;top:303.0px;font-size:20.5px;color:#605e5c">2</span>
<span class="t" style="left:715.94px;top:304.0px;font-size:18px;letter-spacing:0.760px;font-style:italic;color:#323130">2020</span>
<span class="t" style="left:452.62px;top:340.0px;font-size:20.5px;color:#605e5c">3</span>
<span class="t" style="left:715.94px;top:341.0px;font-size:18px;letter-spacing:0.760px;font-style:italic;color:#323130">2020</span>
<span class="t" style="left:997.07px;top:267.0px;font-size:18px;letter-spacing:0.734px;font-style:italic;color:#323130">4657</span>
<span class="t" style="left:997.07px;top:304.0px;font-size:18.14px;letter-spacing:0.872px;font-style:italic;color:#323130">4658</span>
<span class="t" style="left:997.07px;top:341.0px;font-size:18.21px;letter-spacing:0.888px;font-style:italic;color:#323130">4659</span>
<span class="t" style="left:1052.11px;top:267.0px;font-size:17.6px;letter-spacing:0.542px;color:#323130">Ashish</span>
<span class="t" style="left:1051.62px;top:304.0px;font-size:17.73px;letter-spacing:0.797px;color:#323130">Neha</span>
<span class="t" style="left:1051.54px;top:341.0px;font-size:17.6px;letter-spacing:0.534px;color:#323130">Raj</span>
<span class="t" style="left:1332.00px;top:267.0px;font-size:17.6px;letter-spacing:0.789px;color:#323130">Electrical</span>
<span class="t" style="left:1332.80px;top:304.0px;font-size:18.13px;letter-spacing:0.811px;color:#323130">Mechanical</span>
<span class="t" style="left:1332.82px;top:341.0px;font-size:17.6px;letter-spacing:0.617px;color:#323130">Civil</span>
<span class="t" style="left:1473.36px;top:157.8px;font-size:24px;letter-spacing:-0.603px;color:#555555">Query Settings</span>
<span class="t" style="left:1494.84px;top:218.2px;font-size:20px;letter-spacing:-0.819px;font-weight:700;color:#252423">PROPERTIES</span>
<span class="t" style="left:1494.88px;top:253.2px;font-size:20px;letter-spacing:0.599px;color:#252423">Name</span>
<span class="t" style="left:1505.85px;top:290.1px;font-size:20px;letter-spacing:-0.362px;color:#555555">Transform Sample File</span>
<span class="t" style="left:1494.76px;top:334.6px;font-size:20px;letter-spacing:0.368px;color:#117865">All Properties</span>
<span class="t" style="left:1494.47px;top:395.3px;font-size:20px;letter-spacing:-0.609px;font-weight:700;color:#252423">APPLIED STEPS</span>
<span class="t" style="left:1534.80px;top:438.9px;font-size:20px;letter-spacing:0.013px;color:#252423">Source</span>
<span class="t" style="left:1534.93px;top:473.8px;font-size:20px;letter-spacing:0.769px;color:#252423">Navigation</span>
<span class="t" style="left:1534.93px;top:508.8px;font-size:20px;letter-spacing:0.437px;color:#252423">Promoted Headers</span>
<span class="t" style="left:1903.33px;top:2.9px;font-size:16px;color:#ffffff">?</span>
<span class="t" style="left:581.76px;top:160.8px;font-size:28px;font-family:'Liberation Serif', serif;font-style:italic;color:#7a7a7a">f</span>
<span class="t" style="left:591.00px;top:168.6px;font-size:21px;font-family:'Liberation Serif', serif;font-style:italic;color:#7a7a7a;transform:scaleX(1.18);transform-origin:0 0">x</span>
<span class="t" style="left:79.76px;top:380.8px;font-size:28px;font-family:'Liberation Serif', serif;font-style:italic;color:#959595">f</span>
<span class="t" style="left:89.00px;top:388.6px;font-size:21px;font-family:'Liberation Serif', serif;font-style:italic;color:#959595;transform:scaleX(1.18);transform-origin:0 0">x</span>
<span class="t" style="left:488.93px;top:216.8px;font-size:13px;letter-spacing:0.056px;color:#e6f2ee">ABC</span>
<span class="t" style="left:488.35px;top:231.7px;font-size:14.6px;letter-spacing:1.188px;font-weight:700;color:#f2f8f6">123</span>
<span class="t" style="left:769.93px;top:216.8px;font-size:13px;letter-spacing:0.056px;color:#666666">ABC</span>
<span class="t" style="left:769.35px;top:231.7px;font-size:14.6px;letter-spacing:1.188px;font-weight:700;color:#6a6a6a">123</span>
<span class="t" style="left:1051.00px;top:216.8px;font-size:13px;color:#666666">ABC</span>
<span class="t" style="left:1050.75px;top:231.7px;font-size:14.6px;letter-spacing:1.003px;font-weight:700;color:#6a6a6a">123</span>
<span class="t" style="left:1332.26px;top:216.8px;font-size:13px;letter-spacing:0.204px;color:#666666">ABC</span>
<span class="t" style="left:1332.12px;top:231.7px;font-size:14.6px;letter-spacing:1.112px;font-weight:700;color:#6a6a6a">123</span>
<span class="t" style="left:888.48px;top:32.5px;font-size:11.5px;color:#3d76b3">A</span>
<span class="t" style="left:889.96px;top:41.9px;font-size:11px;color:#8e4fb0">Z</span>
<span class="t" style="left:888.82px;top:57.7px;font-size:11px;color:#8e4fb0">Z</span>
<span class="t" style="left:888.26px;top:67.7px;font-size:11.5px;color:#3d76b3">A</span>
<span class="t" style="left:1033.36px;top:83.6px;font-size:10.5px;color:#333333">1</span>
<span class="t" style="left:1045.96px;top:93.5px;font-size:10.5px;color:#333333">2</span>
</body>
</html>
